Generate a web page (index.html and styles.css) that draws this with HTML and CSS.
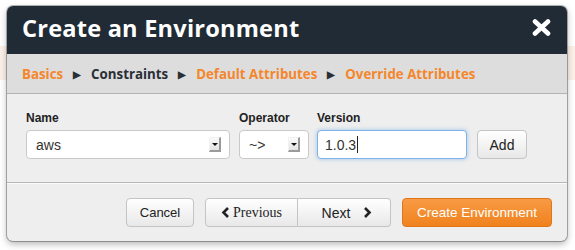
FILE: index.html
```html
<!DOCTYPE html>
<html>
<head>
<meta charset="utf-8">
<link rel="stylesheet" href="styles.css">
</head>
<body>
<div class="modal">
  <div class="modal-header">
    <h1 class="title">Create an Environment</h1>
    <span class="close" aria-label="Close">
      <svg width="19" height="17" viewBox="0 0 19 17"><path d="M3 2.5 L16 14.5 M16 2.5 L3 14.5" stroke="#fff" stroke-width="4.6" stroke-linecap="round"/></svg>
    </span>
  </div>
  <div class="steps">
    <span class="step link">Basics</span>
    <span class="sep">&#9654;</span>
    <span class="step current">Constraints</span>
    <span class="sep">&#9654;</span>
    <span class="step link">Default Attributes</span>
    <span class="sep">&#9654;</span>
    <span class="step link">Override Attributes</span>
  </div>
  <div class="modal-body">
    <div class="field f-name">
      <label class="label">Name</label>
      <div class="select"><span class="val">aws</span><span class="arrow"></span></div>
    </div>
    <div class="field f-op">
      <label class="label">Operator</label>
      <div class="select"><span class="val">~&gt;</span><span class="arrow"></span></div>
    </div>
    <div class="field f-ver">
      <label class="label">Version</label>
      <div class="input"><span class="val">1.0.3</span><span class="caret"></span></div>
    </div>
    <div class="field f-add">
      <span class="label">&nbsp;</span>
      <button class="btn add">Add</button>
    </div>
  </div>
  <div class="modal-footer">
    <button class="btn cancel">Cancel</button>
    <div class="btn-group">
      <button class="btn prev"><svg class="chev" width="9" height="11" viewBox="0 0 9 11"><path d="M7 1 L2.5 5.5 L7 10" fill="none" stroke="#222" stroke-width="2.6"/></svg>Previous</button>
      <button class="btn next">Next<svg class="chev" width="9" height="11" viewBox="0 0 9 11"><path d="M2 1 L6.5 5.5 L2 10" fill="none" stroke="#222" stroke-width="2.6"/></svg></button>
    </div>
    <button class="btn primary">Create Environment</button>
  </div>
</div>
</body>
</html>
```

FILE: styles.css
```css
html, body {
  margin: 0;
  padding: 0;
}
body {
  width: 575px;
  height: 250px;
  overflow: hidden;
  background: linear-gradient(to bottom, #fff 0, #fff 46px, #fcf1e8 46px, #fcf1e8 80px, #fff 80px);
  font-family: "Liberation Sans", Arial, sans-serif;
}
.modal {
  margin: 6px 0 0 7px;
  width: 560px;
  border-radius: 6px;
  overflow: hidden;
  background: #eeeeee;
  box-shadow: 0 0 0 1px rgba(0,0,0,0.28), 0 3px 7px rgba(0,0,0,0.3);
}
.modal-header {
  height: 48px;
  background: #212b35;
  display: flex;
  align-items: center;
  justify-content: space-between;
  padding: 0 16px 0 15px;
}
.title {
  margin: 0;
  color: #fff;
  font-family: "Open Sans", sans-serif;
  font-weight: 700;
  font-size: 23.6px;
  letter-spacing: 0.2px;
  line-height: 1;
  padding-bottom: 3px;
}
.close {
  display: flex;
  margin-top: -6px;
}
.steps {
  height: 39px;
  background: #dddddd;
  border-bottom: 1px solid #b3b3b3;
  display: flex;
  align-items: center;
  padding: 0 15px;
  font-family: "Open Sans", sans-serif;
  font-weight: 700;
  font-size: 13.3px;
}
.step.link { color: #f5862a; }
.step.current { color: #2a2f36; }
.sep {
  color: #2a2f36;
  font-size: 10px;
  margin: 1px 10px 0 10px;
}
.modal-body {
  display: flex;
  padding: 17px 0 17px 19px;
  border-bottom: 1px solid #b8b8b8;
  height: 54px;
}
.field {
  display: flex;
  flex-direction: column;
}
.label {
  font-size: 12px;
  font-weight: 700;
  color: #222;
  height: 19px;
  line-height: 14px;
  display: block;
}
.f-name { width: 204px; }
.f-op { width: 70px; margin-left: 9px; }
.f-ver { width: 150px; margin-left: 8px; }
.f-add { margin-left: 10px; }
.select, .input {
  box-sizing: border-box;
  height: 29px;
  background: #fff;
  border: 1px solid #c9c9c9;
  border-radius: 4px;
  display: flex;
  align-items: center;
  justify-content: space-between;
  padding: 0 8px 0 9px;
  font-size: 14px;
  color: #333;
}
.arrow {
  width: 12px;
  height: 15px;
  box-sizing: border-box;
  background: linear-gradient(to bottom, #fafafa, #e3e3e3);
  border-right: 2px solid #9a9a9a;
  border-bottom: 2px solid #9a9a9a;
  border-top: 1px solid #f2f2f2;
  border-left: 1px solid #f2f2f2;
  position: relative;
}
.arrow::after {
  content: "";
  position: absolute;
  left: 2px;
  top: 5px;
  border-left: 3px solid transparent;
  border-right: 3px solid transparent;
  border-top: 3px solid #111;
}
.input {
  border-color: #7fb2e8;
  box-shadow: 0 0 4px rgba(90, 160, 230, 0.55);
  justify-content: flex-start;
  padding-left: 7px;
}
.caret {
  width: 1px;
  height: 17px;
  background: #222;
  margin-left: 1px;
}
.btn {
  box-sizing: border-box;
  height: 29px;
  font-family: "Liberation Sans", Arial, sans-serif;
  font-size: 13px;
  color: #222;
  background: linear-gradient(to bottom, #ffffff, #e8e8e8);
  border: 1px solid #c4c4c4;
  border-radius: 4px;
  padding: 0;
  display: flex;
  align-items: center;
  justify-content: center;
}
.add { width: 50px; font-size: 14px; }
.modal-footer {
  border-top: 1px solid #fafafa;
  display: flex;
  justify-content: flex-end;
  align-items: center;
  padding: 14px 15px 14px 0;
  gap: 11px;
}
.cancel { width: 68px; }
.btn-group { display: flex; }
.btn-group .btn { width: 93px; }
.prev {
  border-radius: 4px 0 0 4px;
  font-family: "Liberation Serif", "Times New Roman", serif;
  font-size: 14px;
  gap: 3px;
}
.next {
  border-radius: 0 4px 4px 0;
  border-left: none;
  gap: 13px;
  font-size: 14px;
  padding-left: 6px;
}
.primary {
  width: 150px;
  color: #fff;
  background: linear-gradient(to bottom, #f89a45, #f0821d);
  border-color: #e0761a;
  font-size: 13.5px;
}
```
